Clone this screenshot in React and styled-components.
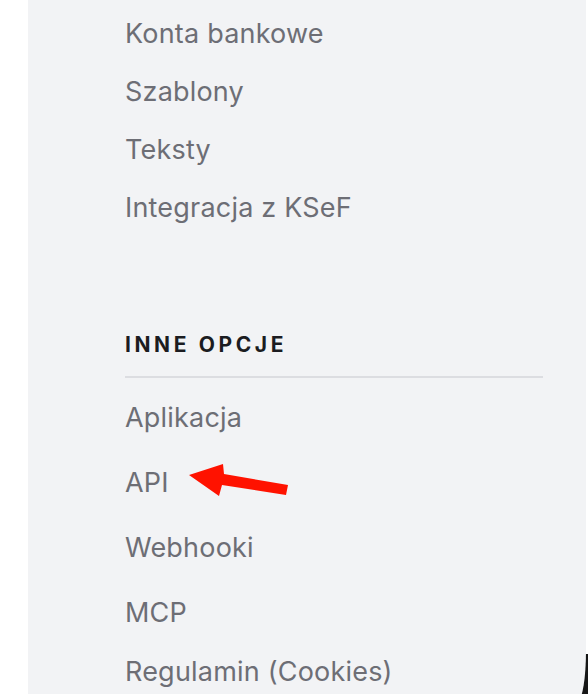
import styled, { createGlobalStyle } from "styled-components";

const GlobalStyle = createGlobalStyle`
    html, body {
        margin: 0;
        padding: 0;
        background: #ffffff;
        overflow: hidden;
    }
    body {
        font-family: Inter, "Noto Sans", sans-serif;
        -webkit-font-smoothing: antialiased;
    }
`;

const Wrapper = styled.div`
    position: relative;
    height: 694px;
    overflow: hidden;
`;

const CornerShade = styled.div`
    position: absolute;
    right: 0;
    bottom: 0;
    width: 10px;
    height: 40px;
    background: #161616;
`;

const Panel = styled.nav`
    position: relative;
    z-index: 1;
    margin-left: 28px;
    width: 558px;
    height: 700px;
    box-sizing: border-box;
    padding: 4px 43px 0 97px;
    background: #f2f3f5;
    border-bottom-right-radius: 8px 50px;
`;

const List = styled.ul`
    list-style: none;
    margin: 0;
    padding: 0;
`;

const Item = styled.li`
    position: relative;
    height: ${(p) => p.$height}px;
    display: flex;
    align-items: center;
    font-size: 27px;
    letter-spacing: 0.2px;
    color: #6d6e75;
`;

const SectionTitle = styled.h3`
    margin: 95px 0 0;
    height: 28px;
    line-height: 28px;
    font-size: 21px;
    font-weight: 700;
    letter-spacing: 3.6px;
    color: #1b1c21;
    text-transform: uppercase;
`;

const Divider = styled.hr`
    margin: 17px 0 7px;
    border: none;
    height: 2px;
    background: #dcdde1;
`;

const Arrow = styled.svg`
    position: absolute;
    left: 60px;
    top: 10px;
    width: 108px;
    height: 40px;
    overflow: visible;
`;

const settings = ["Konta bankowe", "Szablony", "Teksty", "Integracja z KSeF"];
const others = ["Aplikacja", "API", "Webhooki", "MCP", "Regulamin (Cookies)"];

const App = () => (
    <Wrapper>
        <GlobalStyle />
        <CornerShade />
        <Panel>
            <List>
                {settings.map((label) => (
                    <Item key={label} $height={58}>{label}</Item>
                ))}
            </List>
            <SectionTitle>Inne opcje</SectionTitle>
            <Divider />
            <List>
                {others.map((label, i) => (
                    <Item key={label} $height={i === others.length - 1 ? 52 : 65}>
                        {label}
                        {label === "API" && (
                            <Arrow viewBox="185 458 108 40">
                                <polygon
                                    points="189,473 223,462 224,472 288,483 286,493 222,483 219,494"
                                    fill="#ff1200"
                                />
                            </Arrow>
                        )}
                    </Item>
                ))}
            </List>
        </Panel>
    </Wrapper>
);

export default App;
